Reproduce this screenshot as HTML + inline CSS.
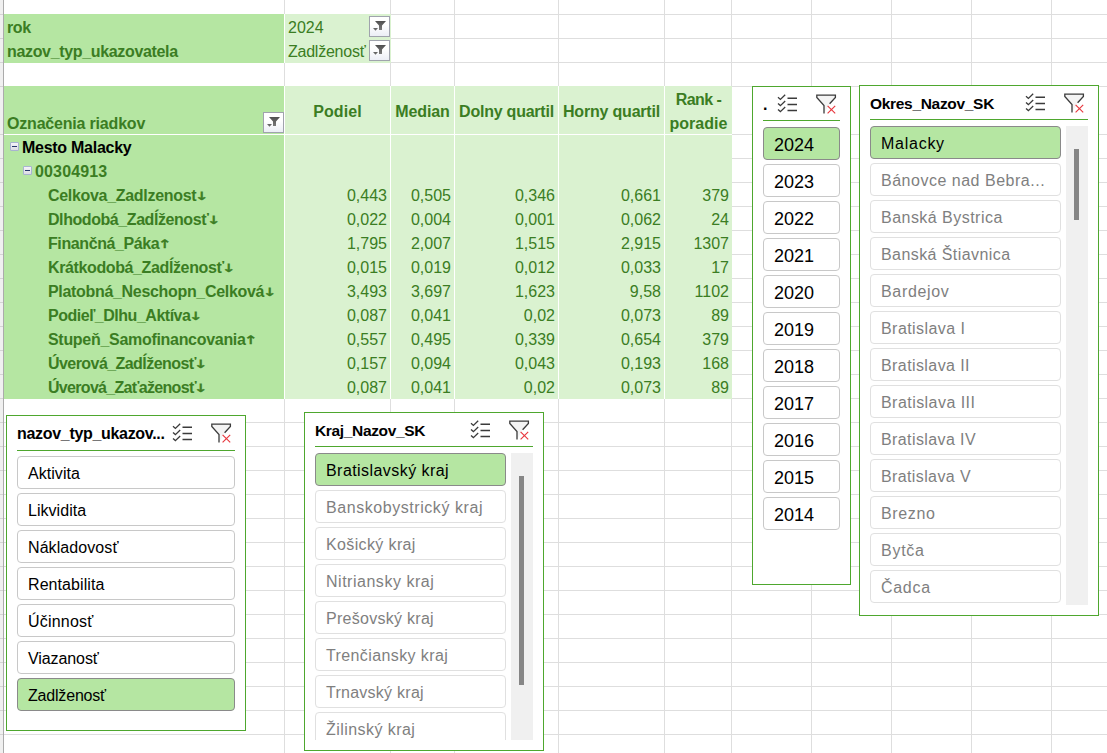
<!DOCTYPE html><html lang="sk"><head><meta charset="utf-8"><title>Pivot</title><style>
*{box-sizing:border-box;margin:0;padding:0}
html,body{width:1107px;height:753px;overflow:hidden;background:#fff}
body{position:relative;font-family:"Liberation Sans",sans-serif;font-size:16px;color:#000}
.a{position:absolute}
.t{position:absolute;white-space:nowrap;line-height:24px;height:24px}
.b{font-weight:bold;letter-spacing:-0.3px}
.g{color:#3b7d23}
.r{text-align:right}
.n{letter-spacing:-0.45px}
.ar{font-family:"DejaVu Sans",sans-serif;font-size:14px;font-weight:normal;-webkit-text-stroke:0.6px #3b7d23;display:inline-block;transform:scale(1.2,0.82);transform-origin:0 100%;letter-spacing:0;margin-left:-1.5px;position:relative;top:-2px}
.btn{position:absolute;width:21px;height:21px;border:1px solid #a0a3ad;background:linear-gradient(#ffffff,#ffffff 40%,#eceef6)}
.col{position:absolute;width:9px;height:9px;border:1px solid #a9b3d1;background:linear-gradient(#f4f4f8,#dcdce4);border-radius:1px}
.col i{position:absolute;left:1px;top:3px;width:5px;height:1px;background:#26356b}
.sl{position:absolute;border:1px solid #4ea72e;background:#fff}
.ul{position:absolute;height:1px;background:#4ea72e}
.it{position:absolute;height:33px;border:1px solid #c8c8c8;border-radius:4px;background:#fff;white-space:nowrap;overflow:hidden}
.it.s{background:#b5e6a2;border-color:#8a8a8a}
.it.d{border-color:#e0e0e0;color:#7f7f7f}
.it span{position:absolute;line-height:24px}
.trk{position:absolute;width:22px;background:#f0f0f0}
.thb{position:absolute;width:5px;background:#868686}
</style></head><body>
<div class="a" style="left:4px;top:14px;width:1103px;height:1px;background:#dedede;"></div>
<div class="a" style="left:4px;top:38px;width:1103px;height:1px;background:#dedede;"></div>
<div class="a" style="left:4px;top:62px;width:1103px;height:1px;background:#dedede;"></div>
<div class="a" style="left:4px;top:86px;width:1103px;height:1px;background:#dedede;"></div>
<div class="a" style="left:4px;top:134px;width:1103px;height:1px;background:#dedede;"></div>
<div class="a" style="left:4px;top:158px;width:1103px;height:1px;background:#dedede;"></div>
<div class="a" style="left:4px;top:182px;width:1103px;height:1px;background:#dedede;"></div>
<div class="a" style="left:4px;top:206px;width:1103px;height:1px;background:#dedede;"></div>
<div class="a" style="left:4px;top:230px;width:1103px;height:1px;background:#dedede;"></div>
<div class="a" style="left:4px;top:254px;width:1103px;height:1px;background:#dedede;"></div>
<div class="a" style="left:4px;top:278px;width:1103px;height:1px;background:#dedede;"></div>
<div class="a" style="left:4px;top:302px;width:1103px;height:1px;background:#dedede;"></div>
<div class="a" style="left:4px;top:326px;width:1103px;height:1px;background:#dedede;"></div>
<div class="a" style="left:4px;top:350px;width:1103px;height:1px;background:#dedede;"></div>
<div class="a" style="left:4px;top:374px;width:1103px;height:1px;background:#dedede;"></div>
<div class="a" style="left:4px;top:398px;width:1103px;height:1px;background:#dedede;"></div>
<div class="a" style="left:4px;top:422px;width:1103px;height:1px;background:#dedede;"></div>
<div class="a" style="left:4px;top:446px;width:1103px;height:1px;background:#dedede;"></div>
<div class="a" style="left:4px;top:470px;width:1103px;height:1px;background:#dedede;"></div>
<div class="a" style="left:4px;top:494px;width:1103px;height:1px;background:#dedede;"></div>
<div class="a" style="left:4px;top:518px;width:1103px;height:1px;background:#dedede;"></div>
<div class="a" style="left:4px;top:542px;width:1103px;height:1px;background:#dedede;"></div>
<div class="a" style="left:4px;top:566px;width:1103px;height:1px;background:#dedede;"></div>
<div class="a" style="left:4px;top:590px;width:1103px;height:1px;background:#dedede;"></div>
<div class="a" style="left:4px;top:614px;width:1103px;height:1px;background:#dedede;"></div>
<div class="a" style="left:4px;top:638px;width:1103px;height:1px;background:#dedede;"></div>
<div class="a" style="left:4px;top:662px;width:1103px;height:1px;background:#dedede;"></div>
<div class="a" style="left:4px;top:686px;width:1103px;height:1px;background:#dedede;"></div>
<div class="a" style="left:4px;top:710px;width:1103px;height:1px;background:#dedede;"></div>
<div class="a" style="left:4px;top:734px;width:1103px;height:1px;background:#dedede;"></div>
<div class="a" style="left:4px;top:758px;width:1103px;height:1px;background:#dedede;"></div>
<div class="a" style="left:284px;top:0px;width:1px;height:753px;background:#dedede;"></div>
<div class="a" style="left:390px;top:0px;width:1px;height:753px;background:#dedede;"></div>
<div class="a" style="left:454px;top:0px;width:1px;height:753px;background:#dedede;"></div>
<div class="a" style="left:558px;top:0px;width:1px;height:753px;background:#dedede;"></div>
<div class="a" style="left:664px;top:0px;width:1px;height:753px;background:#dedede;"></div>
<div class="a" style="left:731px;top:0px;width:1px;height:753px;background:#dedede;"></div>
<div class="a" style="left:811px;top:0px;width:1px;height:753px;background:#dedede;"></div>
<div class="a" style="left:891px;top:0px;width:1px;height:753px;background:#dedede;"></div>
<div class="a" style="left:971px;top:0px;width:1px;height:753px;background:#dedede;"></div>
<div class="a" style="left:1051px;top:0px;width:1px;height:753px;background:#dedede;"></div>
<div class="a" style="left:0px;top:0px;width:3px;height:753px;background:#f0f0f0;"></div>
<div class="a" style="left:0px;top:14px;width:3px;height:1px;background:#d4d4d4;"></div>
<div class="a" style="left:0px;top:38px;width:3px;height:1px;background:#d4d4d4;"></div>
<div class="a" style="left:0px;top:62px;width:3px;height:1px;background:#d4d4d4;"></div>
<div class="a" style="left:0px;top:86px;width:3px;height:1px;background:#d4d4d4;"></div>
<div class="a" style="left:0px;top:134px;width:3px;height:1px;background:#d4d4d4;"></div>
<div class="a" style="left:0px;top:158px;width:3px;height:1px;background:#d4d4d4;"></div>
<div class="a" style="left:0px;top:182px;width:3px;height:1px;background:#d4d4d4;"></div>
<div class="a" style="left:0px;top:206px;width:3px;height:1px;background:#d4d4d4;"></div>
<div class="a" style="left:0px;top:230px;width:3px;height:1px;background:#d4d4d4;"></div>
<div class="a" style="left:0px;top:254px;width:3px;height:1px;background:#d4d4d4;"></div>
<div class="a" style="left:0px;top:278px;width:3px;height:1px;background:#d4d4d4;"></div>
<div class="a" style="left:0px;top:302px;width:3px;height:1px;background:#d4d4d4;"></div>
<div class="a" style="left:0px;top:326px;width:3px;height:1px;background:#d4d4d4;"></div>
<div class="a" style="left:0px;top:350px;width:3px;height:1px;background:#d4d4d4;"></div>
<div class="a" style="left:0px;top:374px;width:3px;height:1px;background:#d4d4d4;"></div>
<div class="a" style="left:0px;top:398px;width:3px;height:1px;background:#d4d4d4;"></div>
<div class="a" style="left:0px;top:422px;width:3px;height:1px;background:#d4d4d4;"></div>
<div class="a" style="left:0px;top:446px;width:3px;height:1px;background:#d4d4d4;"></div>
<div class="a" style="left:0px;top:470px;width:3px;height:1px;background:#d4d4d4;"></div>
<div class="a" style="left:0px;top:494px;width:3px;height:1px;background:#d4d4d4;"></div>
<div class="a" style="left:0px;top:518px;width:3px;height:1px;background:#d4d4d4;"></div>
<div class="a" style="left:0px;top:542px;width:3px;height:1px;background:#d4d4d4;"></div>
<div class="a" style="left:0px;top:566px;width:3px;height:1px;background:#d4d4d4;"></div>
<div class="a" style="left:0px;top:590px;width:3px;height:1px;background:#d4d4d4;"></div>
<div class="a" style="left:0px;top:614px;width:3px;height:1px;background:#d4d4d4;"></div>
<div class="a" style="left:0px;top:638px;width:3px;height:1px;background:#d4d4d4;"></div>
<div class="a" style="left:0px;top:662px;width:3px;height:1px;background:#d4d4d4;"></div>
<div class="a" style="left:0px;top:686px;width:3px;height:1px;background:#d4d4d4;"></div>
<div class="a" style="left:0px;top:710px;width:3px;height:1px;background:#d4d4d4;"></div>
<div class="a" style="left:0px;top:734px;width:3px;height:1px;background:#d4d4d4;"></div>
<div class="a" style="left:0px;top:758px;width:3px;height:1px;background:#d4d4d4;"></div>
<div class="a" style="left:3px;top:0px;width:1px;height:753px;background:#ababab;"></div>
<div class="a" style="left:4px;top:14px;width:280px;height:49px;background:#b5e6a2;"></div>
<div class="a" style="left:284px;top:14px;width:1px;height:49px;background:#fff;"></div>
<div class="a" style="left:285px;top:14px;width:106px;height:49px;background:#daf2d0;"></div>
<div class="a" style="left:4px;top:86px;width:280px;height:313px;background:#b5e6a2;"></div>
<div class="a" style="left:284px;top:86px;width:1px;height:313px;background:#fff;"></div>
<div class="a" style="left:285px;top:86px;width:447px;height:313px;background:#daf2d0;"></div>
<div class="a" style="left:390px;top:86px;width:1px;height:313px;background:#fff;"></div>
<div class="a" style="left:454px;top:86px;width:1px;height:313px;background:#fff;"></div>
<div class="a" style="left:558px;top:86px;width:1px;height:313px;background:#fff;"></div>
<div class="a" style="left:664px;top:86px;width:1px;height:313px;background:#fff;"></div>
<div class="a" style="left:4px;top:134px;width:728px;height:1px;background:#fff;"></div>
<div class="t b g" style="top:16px;left:7px;letter-spacing:-0.40px;">rok</div>
<div class="t b g" style="top:40px;left:7px;letter-spacing:-0.34px;">nazov_typ_ukazovatela</div>
<div class="t g" style="top:16px;left:288px;">2024</div>
<div class="t g" style="top:40px;left:288px;letter-spacing:-0.24px;">Zadlženosť</div>
<div class="t b g" style="top:112px;left:7px;letter-spacing:-0.19px;">Označenia riadkov</div>
<div class="t b g" style="left:285px;width:105px;top:100px;text-align:center;letter-spacing:0.10px;">Podiel</div>
<div class="t b g" style="left:391px;width:63px;top:100px;text-align:center;letter-spacing:-0.11px;">Median</div>
<div class="t b g" style="left:455px;width:103px;top:100px;text-align:center;letter-spacing:-0.23px;">Dolny quartil</div>
<div class="t b g" style="left:559px;width:105px;top:100px;text-align:center;letter-spacing:-0.20px;">Horny quartil</div>
<div class="t b g" style="left:665px;width:67px;top:88px;text-align:center;letter-spacing:-0.60px;">Rank -</div>
<div class="t b g" style="left:665px;width:67px;top:112px;text-align:center;letter-spacing:0.03px;">poradie</div>
<div class="t b" style="top:136px;left:22px;letter-spacing:-0.27px;">Mesto Malacky</div>
<div class="t b g" style="top:160px;left:35px;letter-spacing:0.15px">00304913</div>
<div class="t b g" style="top:184px;left:48px;letter-spacing:-0.31px;">Celkova_Zadlzenost<span class="ar">↓</span></div>
<div class="t g r" style="top:184px;right:720px;">0,443</div>
<div class="t g r" style="top:184px;right:656px;">0,505</div>
<div class="t g r" style="top:184px;right:552px;">0,346</div>
<div class="t g r" style="top:184px;right:446px;">0,661</div>
<div class="t g r" style="top:184px;right:378px;">379</div>
<div class="t b g" style="top:208px;left:48px;letter-spacing:-0.43px;">Dlhodobá_Zadĺženosť<span class="ar">↓</span></div>
<div class="t g r" style="top:208px;right:720px;">0,022</div>
<div class="t g r" style="top:208px;right:656px;">0,004</div>
<div class="t g r" style="top:208px;right:552px;">0,001</div>
<div class="t g r" style="top:208px;right:446px;">0,062</div>
<div class="t g r" style="top:208px;right:378px;">24</div>
<div class="t b g" style="top:232px;left:48px;letter-spacing:-0.40px;">Finančná_Páka<span class="ar">↑</span></div>
<div class="t g r" style="top:232px;right:720px;">1,795</div>
<div class="t g r" style="top:232px;right:656px;">2,007</div>
<div class="t g r" style="top:232px;right:552px;">1,515</div>
<div class="t g r" style="top:232px;right:446px;">2,915</div>
<div class="t g r" style="top:232px;right:378px;">1307</div>
<div class="t b g" style="top:256px;left:48px;letter-spacing:-0.38px;">Krátkodobá_Zadĺženosť<span class="ar">↓</span></div>
<div class="t g r" style="top:256px;right:720px;">0,015</div>
<div class="t g r" style="top:256px;right:656px;">0,019</div>
<div class="t g r" style="top:256px;right:552px;">0,012</div>
<div class="t g r" style="top:256px;right:446px;">0,033</div>
<div class="t g r" style="top:256px;right:378px;">17</div>
<div class="t b g" style="top:280px;left:48px;letter-spacing:-0.32px;">Platobná_Neschopn_Celková<span class="ar">↓</span></div>
<div class="t g r" style="top:280px;right:720px;">3,493</div>
<div class="t g r" style="top:280px;right:656px;">3,697</div>
<div class="t g r" style="top:280px;right:552px;">1,623</div>
<div class="t g r" style="top:280px;right:446px;">9,58</div>
<div class="t g r" style="top:280px;right:378px;">1102</div>
<div class="t b g" style="top:304px;left:48px;letter-spacing:-0.48px;">Podieľ_Dlhu_Aktíva<span class="ar">↓</span></div>
<div class="t g r" style="top:304px;right:720px;">0,087</div>
<div class="t g r" style="top:304px;right:656px;">0,041</div>
<div class="t g r" style="top:304px;right:552px;">0,02</div>
<div class="t g r" style="top:304px;right:446px;">0,073</div>
<div class="t g r" style="top:304px;right:378px;">89</div>
<div class="t b g" style="top:328px;left:48px;letter-spacing:-0.30px;">Stupeň_Samofinancovania<span class="ar">↑</span></div>
<div class="t g r" style="top:328px;right:720px;">0,557</div>
<div class="t g r" style="top:328px;right:656px;">0,495</div>
<div class="t g r" style="top:328px;right:552px;">0,339</div>
<div class="t g r" style="top:328px;right:446px;">0,654</div>
<div class="t g r" style="top:328px;right:378px;">379</div>
<div class="t b g" style="top:352px;left:48px;letter-spacing:-0.56px;">Úverová_Zadĺženosť<span class="ar">↓</span></div>
<div class="t g r" style="top:352px;right:720px;">0,157</div>
<div class="t g r" style="top:352px;right:656px;">0,094</div>
<div class="t g r" style="top:352px;right:552px;">0,043</div>
<div class="t g r" style="top:352px;right:446px;">0,193</div>
<div class="t g r" style="top:352px;right:378px;">168</div>
<div class="t b g" style="top:376px;left:48px;letter-spacing:-0.69px;">Úverová_Zaťaženosť<span class="ar">↓</span></div>
<div class="t g r" style="top:376px;right:720px;">0,087</div>
<div class="t g r" style="top:376px;right:656px;">0,041</div>
<div class="t g r" style="top:376px;right:552px;">0,02</div>
<div class="t g r" style="top:376px;right:446px;">0,073</div>
<div class="t g r" style="top:376px;right:378px;">89</div>
<div class="btn" style="left:369px;top:16px"><svg class="a" style="left:0;top:0" width="19" height="19" viewBox="0 0 19 19"><defs><linearGradient id="fg" x1="0" y1="0" x2="0" y2="1"><stop offset="0" stop-color="#505050"/><stop offset="1" stop-color="#7a7a7a"/></linearGradient></defs><path d="M5 4H16L12 8.6V13H9V8.6Z" fill="url(#fg)"/><path d="M3 11H8L5.5 13.8Z" fill="#666"/></svg></div>
<div class="btn" style="left:369px;top:40px"><svg class="a" style="left:0;top:0" width="19" height="19" viewBox="0 0 19 19"><defs><linearGradient id="fg" x1="0" y1="0" x2="0" y2="1"><stop offset="0" stop-color="#505050"/><stop offset="1" stop-color="#7a7a7a"/></linearGradient></defs><path d="M5 4H16L12 8.6V13H9V8.6Z" fill="url(#fg)"/><path d="M3 11H8L5.5 13.8Z" fill="#666"/></svg></div>
<div class="btn" style="left:263px;top:112px"><svg class="a" style="left:0;top:0" width="19" height="19" viewBox="0 0 19 19"><defs><linearGradient id="fg" x1="0" y1="0" x2="0" y2="1"><stop offset="0" stop-color="#505050"/><stop offset="1" stop-color="#7a7a7a"/></linearGradient></defs><path d="M5 4H16L12 8.6V13H9V8.6Z" fill="url(#fg)"/><path d="M3 11H8L5.5 13.8Z" fill="#666"/></svg></div>
<div class="col" style="left:10px;top:142px"><i></i></div>
<div class="col" style="left:23px;top:166px"><i></i></div>
<div class="sl" style="left:6px;top:415px;width:240px;height:316px;overflow:hidden">
<div class="t b" style="left:10px;top:6px;height:24px;letter-spacing:-0.31px;">nazov_typ_ukazov...</div>
<svg class="a" style="left:165px;top:7px" width="22" height="20" viewBox="0 0 22 20" fill="none" stroke="#3b3b3b" stroke-width="1.3"><path d="M1 3.2L3.4 5.4L8.2 0.8M1 9.4L3.4 11.6L8.2 7M1 15.4L3.4 17.6L8.2 13"/><path d="M10.5 4.2H20M10.5 10.4H20M10.5 16.4H20" stroke-width="1.5"/></svg>
<svg class="a" style="left:203px;top:7px" width="22" height="21" viewBox="0 0 22 21" fill="none"><path d="M9 19.5V11.5L1.8 3.4V1.2H20.4V3.4L14.6 9.8" stroke="#3b3b3b" stroke-width="1.3" fill="#f4f4f4"/><path d="M12.6 11.8L20.2 19.4M20.2 11.8L12.6 19.4" stroke="#e8373e" stroke-width="1.15"/></svg>
<div class="ul" style="left:10px;top:34px;width:218px"></div>
<div class="it" style="left:10px;top:40px;width:218px;letter-spacing:0.05px;"><span style="left:10px;top:5px">Aktivita</span></div>
<div class="it" style="left:10px;top:77px;width:218px;letter-spacing:0.04px;"><span style="left:10px;top:5px">Likvidita</span></div>
<div class="it" style="left:10px;top:114px;width:218px;letter-spacing:0.08px;"><span style="left:10px;top:5px">Nákladovosť</span></div>
<div class="it" style="left:10px;top:151px;width:218px;letter-spacing:0.08px;"><span style="left:10px;top:5px">Rentabilita</span></div>
<div class="it" style="left:10px;top:188px;width:218px;letter-spacing:0.20px;"><span style="left:10px;top:5px">Účinnosť</span></div>
<div class="it" style="left:10px;top:225px;width:218px;letter-spacing:-0.09px;"><span style="left:10px;top:5px">Viazanosť</span></div>
<div class="it s" style="left:10px;top:262px;width:218px;letter-spacing:-0.19px;"><span style="left:10px;top:5px">Zadlženosť</span></div>
</div>
<div class="sl" style="left:304px;top:412px;width:240px;height:339px;overflow:hidden">
<div class="t b" style="left:10px;top:6px;height:24px;font-size:15.5px;letter-spacing:-0.34px;">Kraj_Nazov_SK</div>
<svg class="a" style="left:165px;top:7px" width="22" height="20" viewBox="0 0 22 20" fill="none" stroke="#3b3b3b" stroke-width="1.3"><path d="M1 3.2L3.4 5.4L8.2 0.8M1 9.4L3.4 11.6L8.2 7M1 15.4L3.4 17.6L8.2 13"/><path d="M10.5 4.2H20M10.5 10.4H20M10.5 16.4H20" stroke-width="1.5"/></svg>
<svg class="a" style="left:203px;top:7px" width="22" height="21" viewBox="0 0 22 21" fill="none"><path d="M9 19.5V11.5L1.8 3.4V1.2H20.4V3.4L14.6 9.8" stroke="#3b3b3b" stroke-width="1.3" fill="#f4f4f4"/><path d="M12.6 11.8L20.2 19.4M20.2 11.8L12.6 19.4" stroke="#e8373e" stroke-width="1.15"/></svg>
<div class="ul" style="left:10px;top:33px;width:218px"></div>
<div class="it s" style="left:10px;top:40px;width:191px;letter-spacing:0.44px;"><span style="left:10px;top:5px">Bratislavský kraj</span></div>
<div class="it d" style="left:10px;top:77px;width:191px;letter-spacing:0.56px;"><span style="left:10px;top:5px">Banskobystrický kraj</span></div>
<div class="it d" style="left:10px;top:114px;width:191px;letter-spacing:0.37px;"><span style="left:10px;top:5px">Košický kraj</span></div>
<div class="it d" style="left:10px;top:151px;width:191px;letter-spacing:0.52px;"><span style="left:10px;top:5px">Nitriansky kraj</span></div>
<div class="it d" style="left:10px;top:188px;width:191px;letter-spacing:0.28px;"><span style="left:10px;top:5px">Prešovský kraj</span></div>
<div class="it d" style="left:10px;top:225px;width:191px;letter-spacing:0.39px;"><span style="left:10px;top:5px">Trenčiansky kraj</span></div>
<div class="it d" style="left:10px;top:262px;width:191px;letter-spacing:0.26px;"><span style="left:10px;top:5px">Trnavský kraj</span></div>
<div class="it d" style="left:10px;top:299px;width:191px;letter-spacing:0.44px;"><span style="left:10px;top:5px">Žilinský kraj</span></div>
<div class="trk" style="left:206px;top:40px;height:287px"></div>
<div class="thb" style="left:214px;top:63px;height:209px"></div>
<div class="a" style="left:0;top:327px;width:238px;height:10px;background:#fff"></div>
</div>
<div class="sl" style="left:752px;top:86px;width:99px;height:499px;overflow:hidden">
<div class="t b" style="left:10px;top:6px;height:24px;">.</div>
<svg class="a" style="left:24px;top:7px" width="22" height="20" viewBox="0 0 22 20" fill="none" stroke="#3b3b3b" stroke-width="1.3"><path d="M1 3.2L3.4 5.4L8.2 0.8M1 9.4L3.4 11.6L8.2 7M1 15.4L3.4 17.6L8.2 13"/><path d="M10.5 4.2H20M10.5 10.4H20M10.5 16.4H20" stroke-width="1.5"/></svg>
<svg class="a" style="left:62px;top:7px" width="22" height="21" viewBox="0 0 22 21" fill="none"><path d="M9 19.5V11.5L1.8 3.4V1.2H20.4V3.4L14.6 9.8" stroke="#3b3b3b" stroke-width="1.3" fill="#f4f4f4"/><path d="M12.6 11.8L20.2 19.4M20.2 11.8L12.6 19.4" stroke="#e8373e" stroke-width="1.15"/></svg>
<div class="ul" style="left:10px;top:33px;width:77px"></div>
<div class="it s" style="left:10px;top:40px;width:77px;font-size:18px;"><span style="left:10px;top:5px">2024</span></div>
<div class="it" style="left:10px;top:77px;width:77px;font-size:18px;"><span style="left:10px;top:5px">2023</span></div>
<div class="it" style="left:10px;top:114px;width:77px;font-size:18px;"><span style="left:10px;top:5px">2022</span></div>
<div class="it" style="left:10px;top:151px;width:77px;font-size:18px;"><span style="left:10px;top:5px">2021</span></div>
<div class="it" style="left:10px;top:188px;width:77px;font-size:18px;"><span style="left:10px;top:5px">2020</span></div>
<div class="it" style="left:10px;top:225px;width:77px;font-size:18px;"><span style="left:10px;top:5px">2019</span></div>
<div class="it" style="left:10px;top:262px;width:77px;font-size:18px;"><span style="left:10px;top:5px">2018</span></div>
<div class="it" style="left:10px;top:299px;width:77px;font-size:18px;"><span style="left:10px;top:5px">2017</span></div>
<div class="it" style="left:10px;top:336px;width:77px;font-size:18px;"><span style="left:10px;top:5px">2016</span></div>
<div class="it" style="left:10px;top:373px;width:77px;font-size:18px;"><span style="left:10px;top:5px">2015</span></div>
<div class="it" style="left:10px;top:410px;width:77px;font-size:18px;"><span style="left:10px;top:5px">2014</span></div>
</div>
<div class="sl" style="left:859px;top:85px;width:240px;height:531px;overflow:hidden">
<div class="t b" style="left:10px;top:6px;height:24px;font-size:15.5px;letter-spacing:-0.31px;">Okres_Nazov_SK</div>
<svg class="a" style="left:165px;top:7px" width="22" height="20" viewBox="0 0 22 20" fill="none" stroke="#3b3b3b" stroke-width="1.3"><path d="M1 3.2L3.4 5.4L8.2 0.8M1 9.4L3.4 11.6L8.2 7M1 15.4L3.4 17.6L8.2 13"/><path d="M10.5 4.2H20M10.5 10.4H20M10.5 16.4H20" stroke-width="1.5"/></svg>
<svg class="a" style="left:203px;top:7px" width="22" height="21" viewBox="0 0 22 21" fill="none"><path d="M9 19.5V11.5L1.8 3.4V1.2H20.4V3.4L14.6 9.8" stroke="#3b3b3b" stroke-width="1.3" fill="#f4f4f4"/><path d="M12.6 11.8L20.2 19.4M20.2 11.8L12.6 19.4" stroke="#e8373e" stroke-width="1.15"/></svg>
<div class="ul" style="left:10px;top:33px;width:218px"></div>
<div class="it s" style="left:10px;top:40px;width:191px;letter-spacing:0.74px;"><span style="left:10px;top:5px">Malacky</span></div>
<div class="it d" style="left:10px;top:77px;width:191px;letter-spacing:0.51px;"><span style="left:10px;top:5px">Bánovce nad Bebra...</span></div>
<div class="it d" style="left:10px;top:114px;width:191px;letter-spacing:0.47px;"><span style="left:10px;top:5px">Banská Bystrica</span></div>
<div class="it d" style="left:10px;top:151px;width:191px;letter-spacing:0.42px;"><span style="left:10px;top:5px">Banská Štiavnica</span></div>
<div class="it d" style="left:10px;top:188px;width:191px;letter-spacing:0.66px;"><span style="left:10px;top:5px">Bardejov</span></div>
<div class="it d" style="left:10px;top:225px;width:191px;letter-spacing:0.44px;"><span style="left:10px;top:5px">Bratislava I</span></div>
<div class="it d" style="left:10px;top:262px;width:191px;letter-spacing:0.41px;"><span style="left:10px;top:5px">Bratislava II</span></div>
<div class="it d" style="left:10px;top:299px;width:191px;letter-spacing:0.45px;"><span style="left:10px;top:5px">Bratislava III</span></div>
<div class="it d" style="left:10px;top:336px;width:191px;letter-spacing:0.40px;"><span style="left:10px;top:5px">Bratislava IV</span></div>
<div class="it d" style="left:10px;top:373px;width:191px;letter-spacing:0.38px;"><span style="left:10px;top:5px">Bratislava V</span></div>
<div class="it d" style="left:10px;top:410px;width:191px;letter-spacing:0.62px;"><span style="left:10px;top:5px">Brezno</span></div>
<div class="it d" style="left:10px;top:447px;width:191px;letter-spacing:0.75px;"><span style="left:10px;top:5px">Bytča</span></div>
<div class="it d" style="left:10px;top:484px;width:191px;letter-spacing:0.71px;"><span style="left:10px;top:5px">Čadca</span></div>
<div class="trk" style="left:206px;top:40px;height:479px"></div>
<div class="thb" style="left:214px;top:63px;height:71px"></div>
<div class="a" style="left:0;top:519px;width:238px;height:10px;background:#fff"></div>
</div>
</body></html>
